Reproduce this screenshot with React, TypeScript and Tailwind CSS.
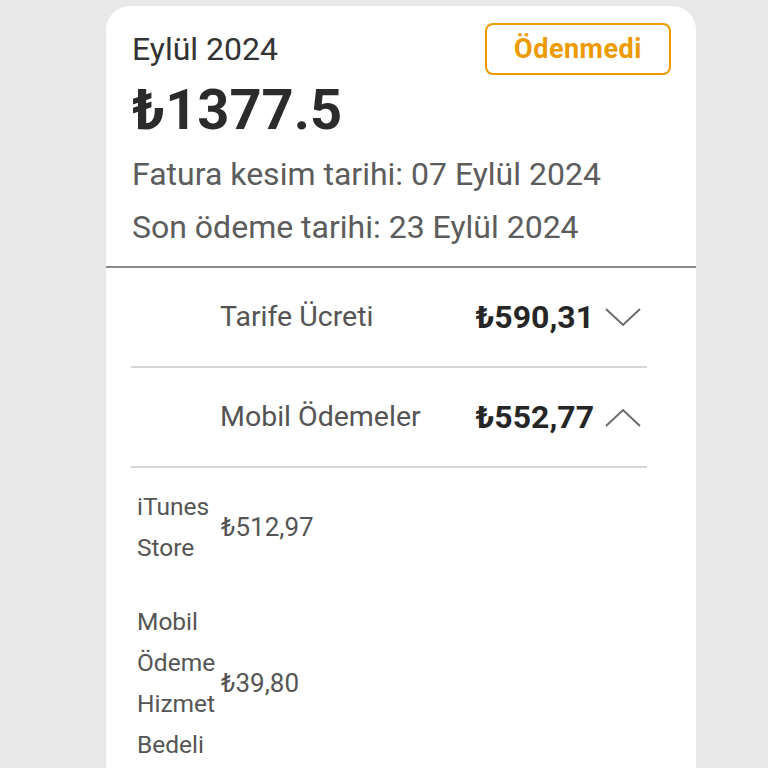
import { ReactNode } from 'react';

const font = { fontFamily: 'Roboto, "Noto Sans", sans-serif' };

function Chevron({ up }: { up?: boolean }) {
  return (
    <svg width="36" height="19" viewBox="0 0 36 19" fill="none" className="ml-[11px]">
      <polyline
        points={up ? '1,18 18,2 35,18' : '1,1 18,17 35,1'}
        stroke="#6b6b6b"
        strokeWidth="2"
        strokeLinejoin="miter"
      />
    </svg>
  );
}

function Row({ label, amount, up }: { label: string; amount: string; up?: boolean }) {
  return (
    <div className="flex h-[100px] items-center border-b-2 border-[#d6d6d6] pl-[89px]">
      <span className="flex-1 text-[28.5px] text-[#545454]">{label}</span>
      <span className="text-[32px] font-bold text-[#262626]">{amount}</span>
      <div className="w-[53px]">
        <Chevron up={up} />
      </div>
    </div>
  );
}

function SubItem({ children, amount }: { children: ReactNode; amount: string }) {
  return (
    <div className="flex items-center">
      <div className="w-[84px] text-[24.5px] leading-[41px] text-[#555]">{children}</div>
      <span className="text-[26px] text-[#555]">{amount}</span>
    </div>
  );
}

export default function App() {
  return (
    <div className="min-h-screen bg-[#e8e8e8] pt-[6px]" style={font}>
      <div className="ml-[106px] w-[590px] min-h-[800px] rounded-t-[24px] bg-white pt-[17px]">
        <div className="px-[26px] pr-[25px]">
          <div className="flex h-[52px] items-center justify-between">
            <span className="text-[32px] text-[#333]">Eylül 2024</span>
            <span className="flex h-[52px] w-[186px] items-center justify-center rounded-[8px] border-2 border-[#eb9a00] text-[27px] font-bold tracking-[0.5px] text-[#eb9a00]">
              Ödenmedi
            </span>
          </div>
          <div className="text-[56px] font-bold leading-[70px] text-[#2b2b2b]">₺1377.5</div>
          <div className="mt-[3px] text-[32px] leading-[53px] text-[#5c5c5c]">
            Fatura kesim tarihi: 07 Eylül 2024
          </div>
          <div className="text-[32px] leading-[53px] text-[#5c5c5c]">Son ödeme tarihi: 23 Eylül 2024</div>
        </div>
        <div className="mt-[12px] h-[2px] bg-[#8a8a8a]" />
        <div className="ml-[25px] w-[516px]">
          <Row label="Tarife Ücreti" amount="₺590,31" />
          <Row label="Mobil Ödemeler" amount="₺552,77" up />
          <div className="flex flex-col gap-[33px] pl-[6px] pt-[18px]">
            <SubItem amount="₺512,97">
              iTunes
              <br />
              Store
            </SubItem>
            <SubItem amount="₺39,80">
              Mobil
              <br />
              Ödeme
              <br />
              Hizmet
              <br />
              Bedeli
            </SubItem>
          </div>
        </div>
      </div>
    </div>
  );
}
